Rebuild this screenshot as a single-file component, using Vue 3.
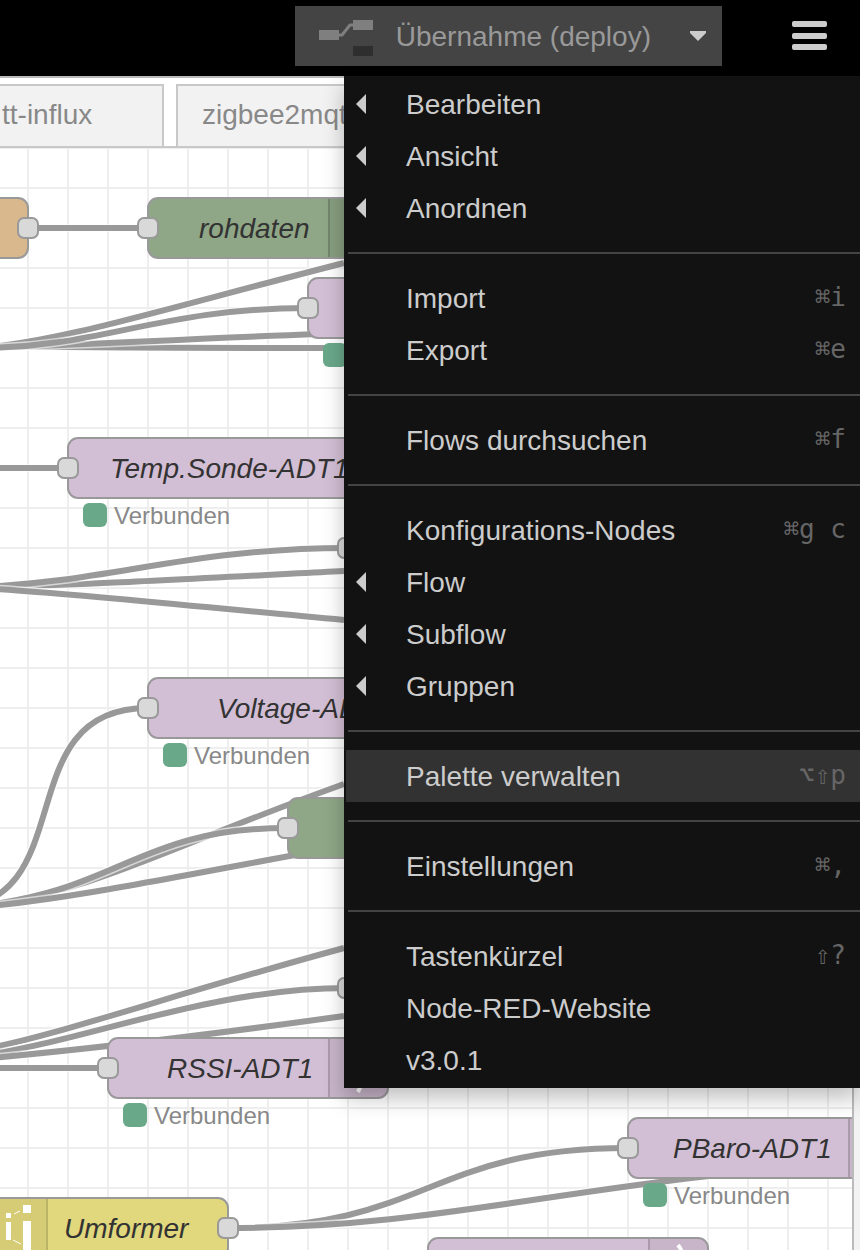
<script setup>
const menuGroups = [
  [
    { label: 'Bearbeiten', sub: true },
    { label: 'Ansicht', sub: true },
    { label: 'Anordnen', sub: true },
  ],
  [
    { label: 'Import', keys: '⌘i' },
    { label: 'Export', keys: '⌘e' },
  ],
  [{ label: 'Flows durchsuchen', keys: '⌘f' }],
  [
    { label: 'Konfigurations-Nodes', keys: '⌘g c' },
    { label: 'Flow', sub: true },
    { label: 'Subflow', sub: true },
    { label: 'Gruppen', sub: true },
  ],
  [{ label: 'Palette verwalten', keys: '⌥⇧p', active: true }],
  [{ label: 'Einstellungen', keys: '⌘,' }],
  [
    { label: 'Tastenkürzel', keys: '⇧?' },
    { label: 'Node-RED-Website' },
    { label: 'v3.0.1' },
  ],
]

const wires = [
  'M28 228 H148',
  'M-20 346 C40 347 100 348 360 348',
  'M-20 347 C60 347 150 340 320 334',
  'M-20 348 C60 342 160 310 344 263',
  'M-20 348 C100 348 160 308 308 308',
  'M-20 468 H68',
  'M-20 587 C60 586 150 581 344 571',
  'M-20 587 C110 582 190 548 348 548',
  'M-20 588 C60 592 180 605 344 620',
  'M-52 908 C85 908 5 708 148 708',
  'M-20 906 C100 890 160 850 344 784',
  'M-20 906 C120 890 140 828 288 828',
  'M-20 907 C60 900 150 882 300 854',
  'M-20 1050 C60 1035 160 998 344 948',
  'M-20 1056 C90 1040 210 988 348 988',
  'M-20 1059 C80 1050 200 1036 344 1016',
  'M-20 1068 H108',
  'M228 1228 C428 1228 428 1148 628 1148',
  'M228 1228 C400 1228 520 1198 700 1177 L760 1170',
]

const purple = '#d3bfd5'
const green = '#8fa786'
const nodes = [
  { x: -80, y: 198, w: 108, fill: '#d8b88c', out: true },
  { x: 148, y: 198, w: 240, fill: green, label: 'rohdaten', tx: 199, iconAt: 328, in: true },
  { x: 308, y: 278, w: 280, fill: purple, in: true, status: ' ' },
  { x: 68, y: 438, w: 340, fill: purple, label: 'Temp.Sonde-ADT1', tx: 110, in: true, status: 'Verbunden' },
  { x: 348, y: 518, w: 200, fill: purple, in: true },
  { x: 148, y: 678, w: 300, fill: purple, label: 'Voltage-ADT1', tx: 217, in: true, status: 'Verbunden' },
  { x: 288, y: 798, w: 200, fill: green, in: true },
  { x: 348, y: 958, w: 200, fill: purple, in: true },
  { x: 108, y: 1038, w: 280, fill: purple, label: 'RSSI-ADT1', tx: 167, iconAt: 328, in: true, status: 'Verbunden' },
  { x: 628, y: 1118, w: 280, fill: purple, label: 'PBaro-ADT1', tx: 673, iconAt: 848, in: true, status: 'Verbunden' },
  { x: -12, y: 1198, w: 240, fill: '#e1d77c', label: 'Umformer', tx: 64, iconEnd: 48, out: true },
  { x: 428, y: 1238, w: 280, fill: purple, iconAt: 648 },
]

const nodePath = (n) => `M${n.x + 10} ${n.y} h${n.w - 20} a10 10 0 0 1 10 10 v40 a10 10 0 0 1 -10 10 h${20 - n.w} a10 10 0 0 1 -10 -10 v-40 a10 10 0 0 1 10 -10 z`
const rightCap = (n) => `M${n.iconAt} ${n.y + 1} H${n.x + n.w - 10} a9 9 0 0 1 9 9 v40 a9 9 0 0 1 -9 9 H${n.iconAt} z`
</script>

<template>
  <div class="editor">
    <header class="header">
      <div class="deploy">
        <button class="deploy-main" type="button">
          <svg class="deploy-icon" width="54" height="36" viewBox="0 0 54 36" aria-hidden="true">
            <path d="M19 15 h4 l8 -10 h4" fill="none" stroke="#7f7f7f" stroke-width="3" stroke-linejoin="round" />
            <rect x="0" y="10" width="20" height="10" fill="#7f7f7f" />
            <rect x="34" y="0" width="20" height="10" fill="#7f7f7f" />
            <rect x="34" y="26" width="20" height="10" fill="#2e2e2e" />
          </svg>
          <span class="deploy-text">Übernahme (deploy)</span>
        </button>
        <button class="deploy-caret" type="button" aria-label="Übernahme-Optionen">
          <svg width="16" height="10" viewBox="0 0 16 10" aria-hidden="true"><path d="M0 0 h16 v2 l-8 8 l-8 -8 z" fill="#ccc" /></svg>
        </button>
      </div>
      <button class="burger" type="button" aria-label="Menü">
        <svg width="35" height="30" viewBox="0 0 35 30" aria-hidden="true" fill="#ccc">
          <rect width="35" height="6" rx="2" />
          <rect y="12" width="35" height="6" rx="2" />
          <rect y="23" width="35" height="6" rx="2" />
        </svg>
      </button>

      <nav class="menu">
        <ul v-for="(group, g) in menuGroups" :key="g" class="group">
          <li v-for="item in group" :key="item.label">
            <button type="button" class="item" :class="{ active: item.active }">
              <svg class="arrow" width="10" height="20" viewBox="0 0 10 20" aria-hidden="true">
                <path v-if="item.sub" d="M10 0 V20 L0 10 z" fill="#ccc" />
              </svg>
              <span class="label">{{ item.label }}</span>
              <kbd v-if="item.keys">{{ item.keys }}</kbd>
            </button>
          </li>
        </ul>
      </nav>
    </header>

    <div class="body">
      <main class="workspace">
        <div class="tabs">
          <a class="tab first" href="#">tt-influx</a>
          <a class="tab" href="#">zigbee2mqtt</a>
        </div>
        <svg class="canvas">
          <defs>
            <pattern id="grid" x="28" y="0" width="40" height="40" patternUnits="userSpaceOnUse">
              <path d="M0 0 H1 V40 H0 z M39 0 H40 V40 H39 z M0 39 H40 V40 H0 z M0 0 H40 V1 H0 z" fill="#eee" />
            </pattern>
          </defs>
          <rect width="100%" height="100%" fill="url(#grid)" />
          <g transform="translate(0 -148)">
            <g v-for="d in wires" :key="d" fill="none">
              <path :d="d" stroke="#fff" stroke-opacity="0.6" stroke-width="9" />
              <path :d="d" stroke="#999" stroke-width="6" />
            </g>
            <g v-for="n in nodes" :key="n.x + '-' + n.y">
              <path :d="nodePath(n)" :fill="n.fill" />
              <template v-if="n.iconAt">
                <path :d="rightCap(n)" fill="#000" fill-opacity="0.05" />
                <path :d="`M${n.iconAt + 1} ${n.y} v60`" stroke="#000" stroke-opacity="0.15" stroke-width="2" />
              </template>
              <template v-if="n.iconEnd">
                <rect :x="n.x" :y="n.y" :width="n.iconEnd - n.x" height="60" fill="#000" fill-opacity="0.05" />
                <path :d="`M${n.iconEnd - 1} ${n.y} v60`" stroke="#000" stroke-opacity="0.12" stroke-width="2" />
              </template>
              <path :d="nodePath(n)" fill="none" stroke="#999" stroke-width="2" />
              <rect v-if="n.in" class="port" :x="n.x - 10" :y="n.y + 20" width="20" height="20" rx="6" />
              <rect v-if="n.out" class="port" :x="n.x + n.w - 10" :y="n.y + 20" width="20" height="20" rx="6" />
              <text v-if="n.label" class="name" :x="n.tx" :y="n.y + 40">{{ n.label }}</text>
              <template v-if="n.status">
                <rect :x="n.x + 15" :y="n.y + 65" width="24" height="24" rx="6" fill="#6aa88a" />
                <text class="status" :x="n.x + 46" :y="n.y + 86">{{ n.status }}</text>
              </template>
            </g>
            <g fill="#fff">
              <rect x="6" y="1213" width="5" height="5" />
              <rect x="6" y="1222" width="5" height="18" />
              <rect x="23" y="1205" width="8" height="8" />
              <rect x="23" y="1221" width="8" height="32" />
              <path d="M14 1214 l6 -3 M13 1240 l8 4" stroke="#fff" stroke-width="1" />
            </g>
            <path d="M358 1092 q4 -8 4 -14 M678 1245 q4 5 5 12" fill="none" stroke="#fff" stroke-width="4" />
          </g>
        </svg>
      </main>
      <aside class="sidebar"></aside>
    </div>
  </div>
</template>

<style>
body {
  background: #fff;
}
</style>

<style scoped>
.editor {
  display: flex;
  flex-direction: column;
  height: 100vh;
  overflow: hidden;
  font-family: "Liberation Sans", Arial, sans-serif;
  font-size: 28px;
  background: #fff;
}
button {
  border: 0;
  margin: 0;
  padding: 0;
  background: none;
  font: inherit;
  color: inherit;
}
.header {
  position: relative;
  z-index: 2;
  display: flex;
  flex: none;
  justify-content: flex-end;
  align-items: flex-start;
  gap: 70px;
  height: 60px;
  padding: 6px 33px 10px 0;
  background: #000;
}
.deploy {
  display: flex;
  height: 60px;
  background: #444;
  color: #999;
}
.deploy-main {
  display: flex;
  align-items: center;
  gap: 23px;
  padding-left: 24px;
}
.deploy-icon {
  margin-top: 14px;
  align-self: flex-start;
}
.deploy-text,
.label {
  padding-top: 2px;
}
.deploy-caret {
  width: 48px;
  margin-left: 23px;
  display: flex;
  align-items: center;
  justify-content: center;
}
.burger {
  height: 60px;
  display: flex;
  align-items: center;
}
.menu {
  position: absolute;
  top: 100%;
  right: 0;
  box-sizing: border-box;
  width: 60%;
  padding: 2px 0 2px 2px;
  background: #121212;
  color: #ccc;
  box-shadow: 0 10px 20px rgba(0, 0, 0, 0.25);
}
.group {
  list-style: none;
  margin: 0;
  padding: 0;
}
.group + .group::before {
  content: "";
  display: block;
  height: 2px;
  margin: 18px 0 18px 2px;
  background: #444;
}
.item {
  display: flex;
  align-items: center;
  width: 100%;
  height: 52px;
  padding: 0 14px 0 10px;
  text-align: left;
}
.item.active {
  background: #323232;
}
.label {
  flex: 1;
  margin-left: 40px;
}
kbd {
  padding-bottom: 2px;
  font-family: "DejaVu Sans Mono", monospace;
  font-size: 26px;
  color: #666;
}
.body {
  display: flex;
  flex: 1;
  min-height: 0;
  border-top: 2px solid #bbb;
}
.workspace {
  display: flex;
  flex-direction: column;
  flex: 1;
  min-width: 0;
}
.tabs {
  display: flex;
  flex: none;
  gap: 12px;
  padding-top: 6px;
  border-bottom: 2px solid #c8c8c8;
}
.tab {
  box-sizing: border-box;
  width: 260px;
  height: 62px;
  padding-left: 24px;
  border: 2px solid #c8c8c8;
  border-bottom: 0;
  background: #f2f2f2;
  color: #888;
  line-height: 58px;
  text-decoration: none;
}
.tab.first {
  width: 164px;
  padding-left: 2px;
  border-left: 0;
}
.canvas {
  display: block;
  flex: 1;
  width: 100%;
  min-height: 0;
}
.port {
  fill: #d9d9d9;
  stroke: #999;
  stroke-width: 2;
}
.name {
  font-size: 28px;
  font-style: italic;
  fill: #333;
}
.status {
  font-size: 24px;
  fill: #888;
}
.sidebar {
  flex: none;
  width: 6px;
  border-left: 2px solid #bbb;
  background: #f3f3f3;
}
</style>
